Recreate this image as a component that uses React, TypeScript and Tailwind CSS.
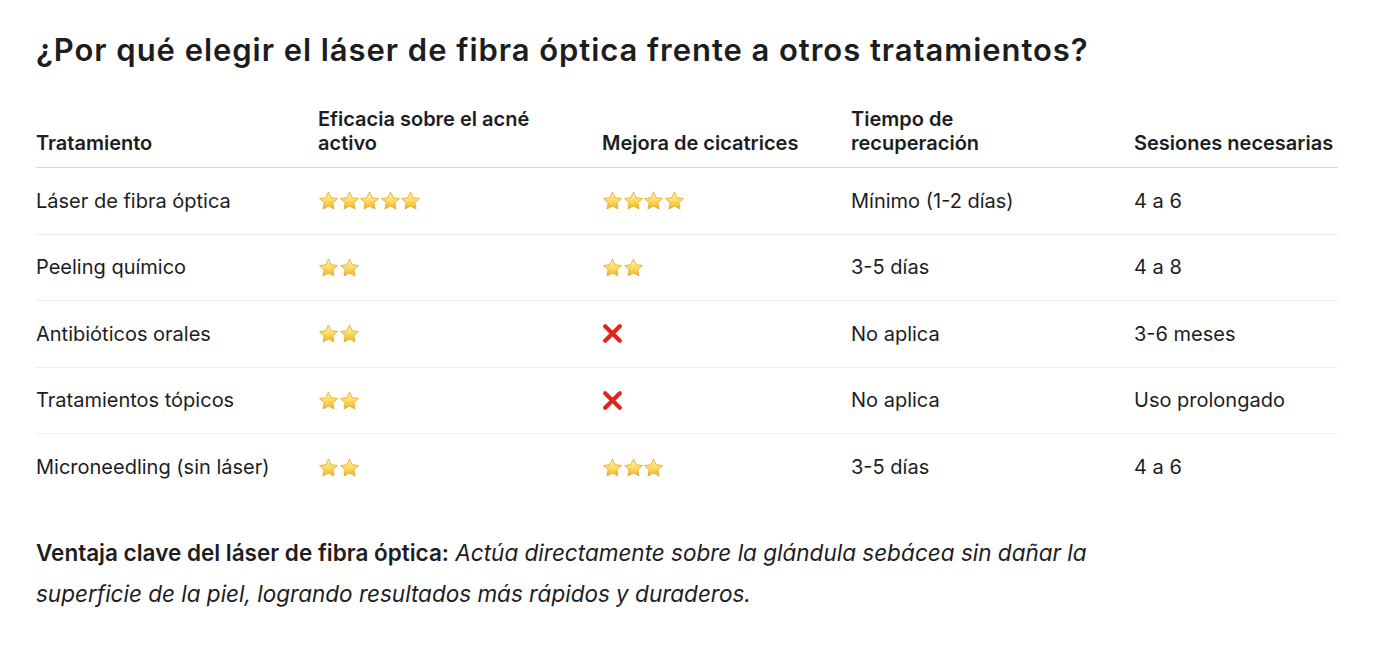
import React from "react";

const Star: React.FC = () => (
  <svg width="21" height="19" viewBox="0 0 24 22" className="inline-block">
    <defs>
      <linearGradient id="starFill" x1="0" y1="0" x2="0" y2="1">
        <stop offset="0%" stopColor="#fff7c2" />
        <stop offset="55%" stopColor="#fcd85a" />
        <stop offset="100%" stopColor="#f2b12c" />
      </linearGradient>
    </defs>
    <path
      d="M12 1.2l3.1 6.6 7.2.9-5.3 5 1.4 7.1L12 17.3l-6.4 3.5L7 13.7 1.7 8.7l7.2-.9z"
      fill="url(#starFill)"
      stroke="#e6a825"
      strokeWidth="1"
      strokeLinejoin="round"
    />
  </svg>
);

const Stars: React.FC<{ n: number }> = ({ n }) => (
  <span className="inline-flex items-center -space-x-[0.5px]">
    {Array.from({ length: n }).map((_, i) => (
      <Star key={i} />
    ))}
  </span>
);

const Cross: React.FC = () => (
  <svg width="21" height="21" viewBox="0 0 20 20" className="inline-block">
    <path d="M3 3L17 17M17 3L3 17" stroke="#e0261b" strokeWidth="4" strokeLinecap="round" />
  </svg>
);

interface Row {
  name: string;
  acne: React.ReactNode;
  scars: React.ReactNode;
  time: string;
  sessions: string;
}

const rows: Row[] = [
  { name: "Láser de fibra óptica", acne: <Stars n={5} />, scars: <Stars n={4} />, time: "Mínimo (1-2 días)", sessions: "4 a 6" },
  { name: "Peeling químico", acne: <Stars n={2} />, scars: <Stars n={2} />, time: "3-5 días", sessions: "4 a 8" },
  { name: "Antibióticos orales", acne: <Stars n={2} />, scars: <Cross />, time: "No aplica", sessions: "3-6 meses" },
  { name: "Tratamientos tópicos", acne: <Stars n={2} />, scars: <Cross />, time: "No aplica", sessions: "Uso prolongado" },
  { name: "Microneedling (sin láser)", acne: <Stars n={2} />, scars: <Stars n={3} />, time: "3-5 días", sessions: "4 a 6" },
];

export default function App() {
  return (
    <div className="min-h-screen bg-white text-[#1d1d1f] px-[36px] pt-[28px]" style={{ fontFamily: "Inter, 'Noto Sans', sans-serif" }}>
      <h1 className="text-[31px] font-semibold leading-[44px] tracking-[0.95px] whitespace-nowrap">
        ¿Por qué elegir el láser de fibra óptica frente a otros tratamientos?
      </h1>

      <table className="mt-[35px] w-[1302px] table-fixed border-collapse">
        <colgroup>
          <col className="w-[282px]" />
          <col className="w-[284px]" />
          <col className="w-[249px]" />
          <col className="w-[283px]" />
          <col className="w-[204px]" />
        </colgroup>
        <thead>
          <tr className="border-b border-[#d9d9d9] text-left align-bottom text-[20px] leading-[24px]">
            <th className="pb-[12px] font-semibold">Tratamiento</th>
            <th className="pb-[12px] font-semibold">Eficacia sobre el acné<br />activo</th>
            <th className="pb-[12px] font-semibold">Mejora de cicatrices</th>
            <th className="pb-[12px] font-semibold">Tiempo de<br />recuperación</th>
            <th className="pb-[12px] font-semibold whitespace-nowrap">Sesiones necesarias</th>
          </tr>
        </thead>
        <tbody className="text-[20px] leading-[24px]">
          {rows.map((r, i) => (
            <tr key={r.name} className={i < rows.length - 1 ? "h-[66.5px] border-b border-[#efefef]" : "h-[66.5px]"}>
              <td className="align-middle whitespace-nowrap">{r.name}</td>
              <td className="align-middle"><div className="flex items-center">{r.acne}</div></td>
              <td className="align-middle"><div className="flex items-center">{r.scars}</div></td>
              <td className="align-middle whitespace-nowrap">{r.time}</td>
              <td className="align-middle whitespace-nowrap">{r.sessions}</td>
            </tr>
          ))}
        </tbody>
      </table>

      <p className="mt-[32px] text-[22.5px] leading-[41px] w-[1085px]">
        <strong className="font-semibold">Ventaja clave del láser de fibra óptica:</strong>{" "}
        <em>Actúa directamente sobre la glándula sebácea sin dañar la superficie de la piel, logrando resultados más rápidos y duraderos.</em>
      </p>
    </div>
  );
}
